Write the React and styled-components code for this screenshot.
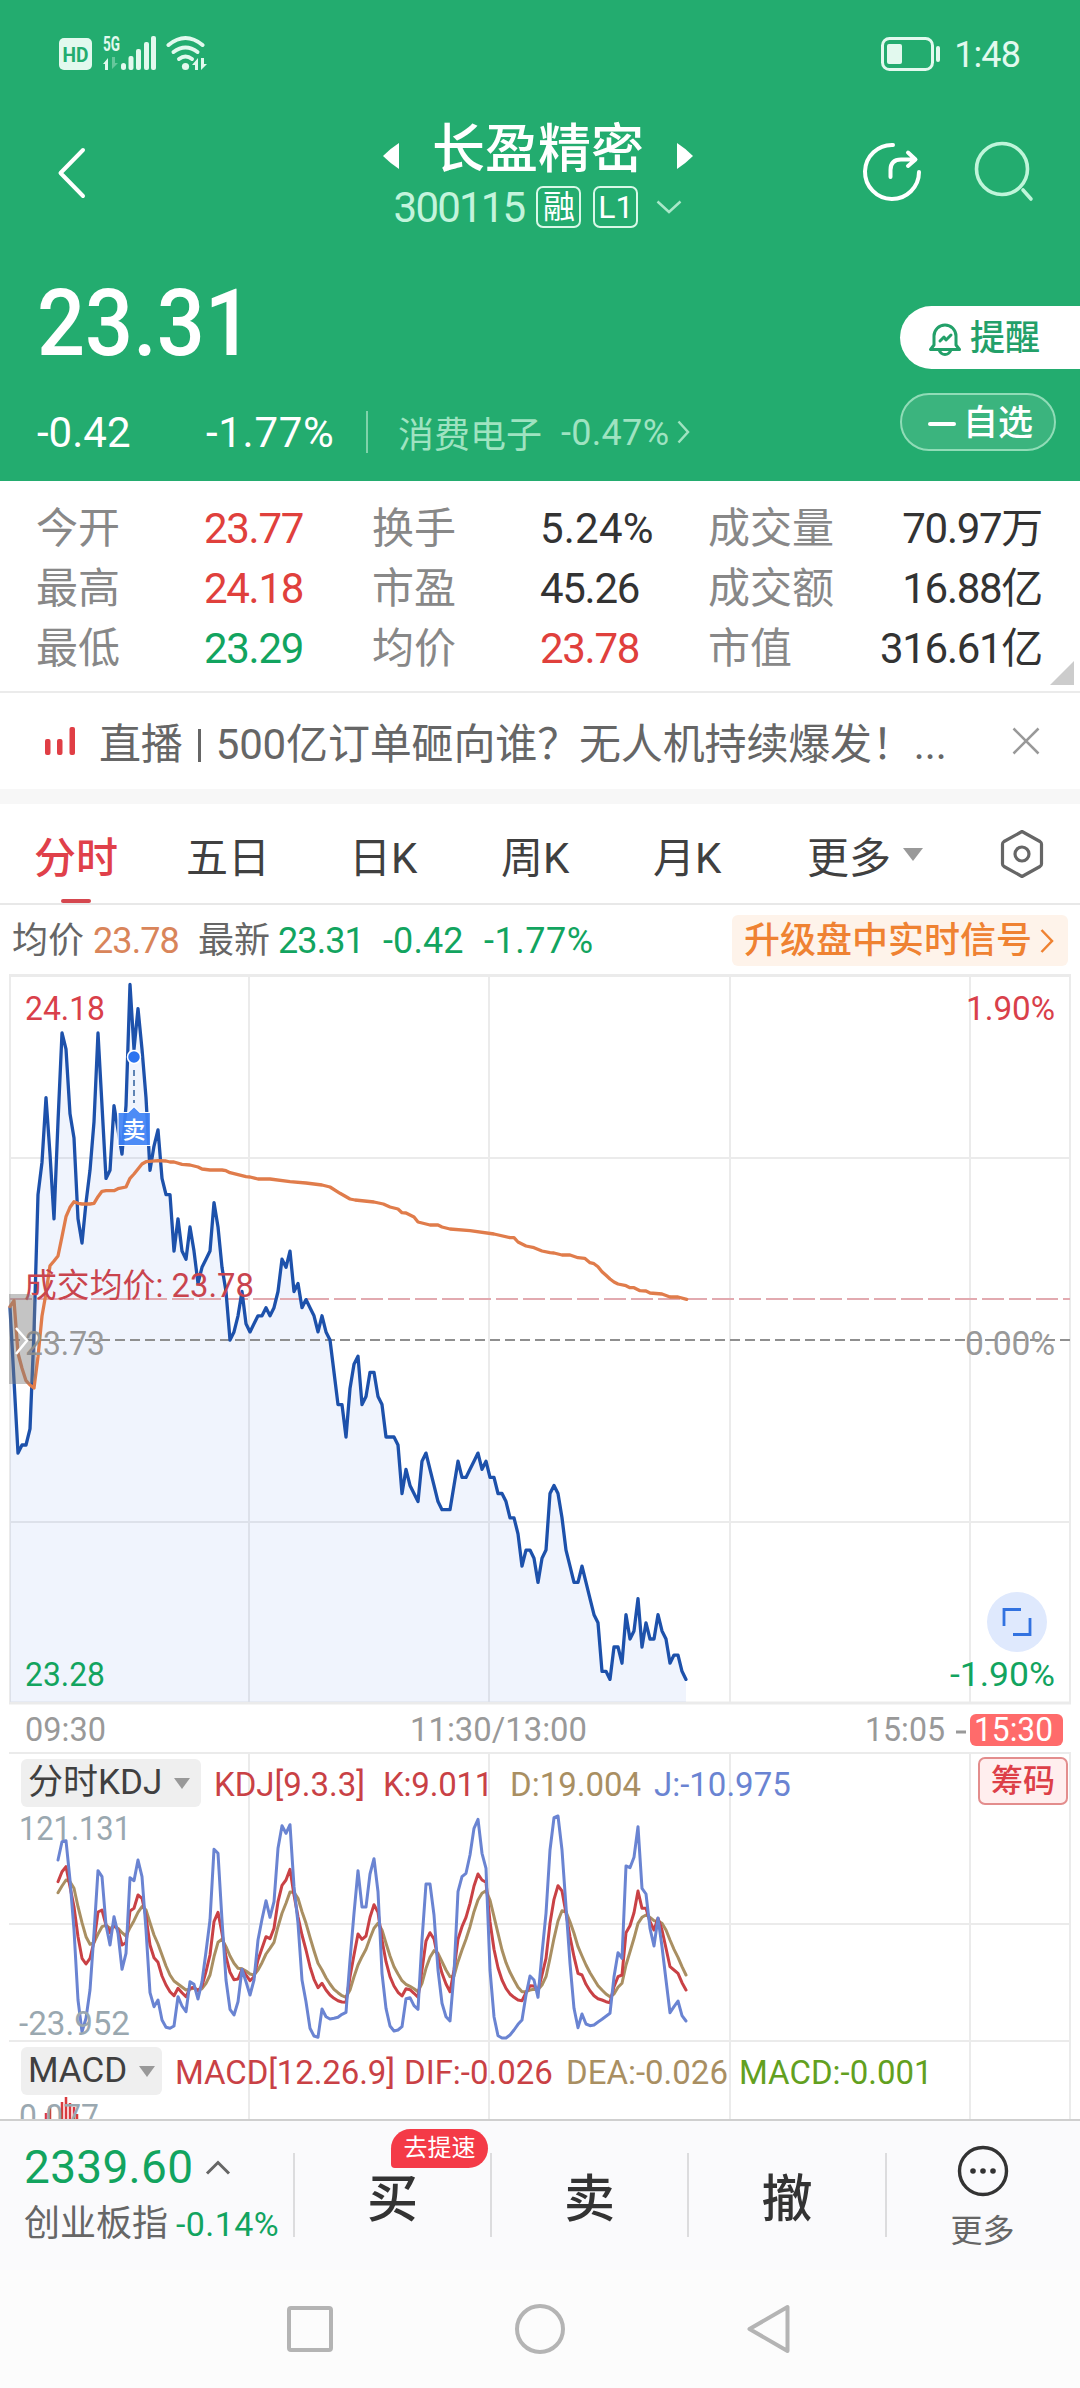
import React from 'react';
import styled, { createGlobalStyle } from 'styled-components';

const GREEN = '#12a45f';
const RED = '#e0403c';
const GRID = '#ebebeb';

// minute by minute price, in cents away from the previous close
const prices = [
  4, -5, -14, -13, -13, -11, 1, 18, 22, 30, 23, 15, 27, 38, 36, 28, 25, 15, 12, 17, 21, 27, 38, 29, 20, 21, 29, 26, 23, 29,
  44, 36, 41, 36, 30, 21, 24, 26, 20, 18, 18, 11, 15, 11, 10, 14, 11, 7, 9, 10, 11, 17, 14, 9, 6, 0, 1, 3, 6, 2,
  1, 2, 3, 3, 4, 3, 4, 6, 10, 9, 11, 6, 7, 4, 5, 4, 3, 1, 3, 1, 0, -4, -8, -8, -12, -6, -3, -2, -8, -7,
  -4, -4, -7, -8, -12, -12, -12, -13, -19, -16, -18, -19, -20, -15, -14, -16, -18, -20, -21, -21, -21, -18, -15, -17, -17,
  -16, -15, -14, -16, -15, -17, -17, -19, -19, -20, -22, -22, -24, -28, -26, -26, -27, -30, -27, -26, -19, -18, -19, -22,
  -26, -28, -30, -30, -28, -30, -32, -34, -35, -41, -41, -42, -38, -38, -40, -34, -37, -36, -32, -38, -35, -37, -37, -34,
  -36, -37, -40, -39, -39, -41, -42,
];

const avgMorning = [
  [30, 1040], [42, 1022], [54, 1180], [66, 1225], [78, 1262], [90, 1275], [102, 1284], [114, 1190], [126, 1068], [138, 1000],
  [150, 917], [162, 903], [174, 888], [186, 830], [198, 770], [210, 742], [222, 725], [234, 730], [246, 732], [270, 732],
  [282, 730], [294, 710], [306, 694], [318, 692], [342, 692], [354, 686], [378, 681], [390, 655], [402, 642], [426, 612],
  [438, 605], [474, 602], [498, 603], [510, 606], [522, 606], [546, 613], [570, 615], [594, 621], [606, 627], [630, 630],
  [666, 630], [678, 632], [690, 638], [738, 650], [750, 651], [774, 657], [810, 657], [870, 665], [918, 669], [966, 675],
  [990, 681], [1020, 700],
];
const avgNoon = [
  [330, 177], [345, 180], [402, 186], [430, 192], [450, 201], [474, 207], [486, 218], [498, 219], [522, 231], [534, 246],
  [570, 255], [594, 255], [606, 261], [630, 267], [690, 272], [762, 282], [810, 293], [822, 293], [834, 306], [858, 318],
  [882, 323], [906, 333], [930, 338], [942, 339], [966, 345], [990, 345], [1014, 353], [1034, 355], [1050, 368], [1062, 371],
  [1074, 380], [1086, 395], [1098, 406], [1110, 417], [1122, 426], [1134, 432], [1158, 437], [1170, 443], [1182, 443],
  [1200, 452], [1218, 453], [1230, 459], [1266, 462], [1290, 471], [1314, 471], [1340, 478],
];
const avgPoints = [...avgMorning, ...avgNoon.map(([x, y]) => [x + 720, y + 540])]
  .map(([x, y]) => `${(x / 3).toFixed(1)},${(y / 3 - 14).toFixed(1)}`)
  .join(' ');

const pricePoints = prices.map((v, i) => `${10 + i * 4},${(366 - v * 8.08).toFixed(1)}`).join(' ');

const join = (a, b) => [...a, ...b.map((v) => v + 120)];

const jLine = join(
  [
    480, 425, 422, 540, 690, 900, 995, 955, 870, 700, 512, 530, 675, 735, 650, 700, 808, 760, 533, 542, 480, 530, 690, 878, 920,
    900, 960, 982, 985, 978, 890, 918, 935, 845, 853, 897, 845, 755, 660, 448, 460, 660, 840, 928, 945, 905, 808, 845, 885, 840,
    720, 658, 602, 652, 605, 445, 377, 400, 374, 560, 670, 840, 905, 985, 1008, 1012, 927, 950, 957, 955, 952, 943, 937, 780,
    640, 512, 621, 621, 522, 476, 575,
  ],
  [
    700, 805, 858, 873, 870, 860, 776, 773, 797, 808, 600, 432, 432, 525, 690, 790, 830, 843, 700, 455, 410, 400, 345, 265, 238,
    340, 385, 690, 830, 887, 894, 894, 885, 870, 853, 840, 765, 708, 720, 772, 640, 520, 330, 233, 228, 330, 500, 670, 805, 863,
    822, 852, 857, 855, 846, 838, 829, 820, 710, 638, 655, 378, 383, 352, 260, 445, 462, 565, 618, 534, 620, 720, 818, 800,
    783, 827, 843,
  ]
);
const kLine = join(
  [
    545, 515, 500, 560, 620, 710, 775, 792, 775, 725, 636, 630, 675, 698, 672, 690, 735, 728, 633, 625, 585, 595, 650, 735, 773,
    787, 828, 855, 875, 887, 865, 878, 890, 865, 862, 873, 858, 815, 765, 665, 637, 700, 770, 817, 839, 837, 808, 825, 842, 830,
    780, 745, 710, 716, 685, 605, 556, 540, 508, 585, 650, 705, 750, 800, 838, 863, 850, 870, 885, 895, 902, 906, 907, 830,
    765, 702, 718, 708, 652, 614, 637,
  ],
  [
    600, 665, 710, 738, 757, 768, 746, 749, 760, 772, 690, 603, 578, 597, 655, 700, 732, 755, 690, 598, 560, 532, 490, 438, 402,
    420, 427, 545, 628, 683, 720, 745, 762, 772, 780, 782, 758, 737, 738, 750, 705, 655, 550, 478, 437, 453, 520, 590, 650, 700,
    705, 733, 752, 767, 776, 780, 785, 788, 740, 710, 705, 578, 557, 518, 453, 505, 505, 545, 570, 535, 570, 625, 680, 690,
    700, 728, 750,
  ]
);
const dLine = join(
  [
    578, 558, 540, 545, 565, 620, 668, 710, 733, 728, 702, 680, 676, 685, 680, 685, 698, 708, 683, 662, 637, 620, 630, 668, 705,
    732, 765, 798, 825, 843, 852, 861, 870, 867, 865, 870, 866, 850, 825, 770, 727, 718, 740, 768, 790, 805, 806, 813, 822, 825,
    810, 788, 762, 745, 727, 680, 640, 610, 576, 577, 595, 635, 670, 712, 752, 790, 810, 833, 852, 868, 878, 887, 892, 870,
    830, 795, 770, 748, 715, 685, 670,
  ],
  [
    570, 610, 648, 680, 702, 722, 733, 739, 746, 755, 730, 685, 652, 632, 640, 665, 690, 710, 708, 665, 630, 598, 560, 515, 480,
    460, 452, 480, 530, 580, 630, 668, 697, 720, 742, 755, 755, 750, 748, 749, 735, 710, 655, 595, 543, 512, 515, 545, 580, 620,
    648, 675, 698, 718, 737, 750, 762, 770, 762, 742, 730, 675, 635, 595, 550, 532, 525, 532, 542, 543, 550, 570, 600, 628,
    652, 680, 705,
  ]
);
const kdjPoints = (ys) => ys.map((y, i) => `${58 + i * 4},${(y / 3 - 52).toFixed(1)}`).join(' ');

const stats = [
  ['今开', '23.77', RED, '换手', '5.24%', '#333', '成交量', '70.97万'],
  ['最高', '24.18', RED, '市盈', '45.26', '#333', '成交额', '16.88亿'],
  ['最低', '23.29', GREEN, '均价', '23.78', RED, '市值', '316.61亿'],
];

const tabs = ['五日', '日K', '周K', '月K'];

function ChartText({ x, y, w, color, children, end }) {
  return (
    <text x={x} y={y} fill={color} fontSize="33" textLength={w} lengthAdjust="spacingAndGlyphs" textAnchor={end ? 'end' : 'start'}>
      {children}
    </text>
  );
}

function StatusIcons() {
  return (
    <svg width="160" height="44" viewBox="0 0 160 44" fill="#e2f9ee">
      <rect x="5" y="6" width="33" height="32" rx="5" />
      <text x="21.5" y="30" fontSize="21" fontWeight="700" fill="#23ac6f" textAnchor="middle" textLength="26" lengthAdjust="spacingAndGlyphs">HD</text>
      <text x="49" y="19" fontSize="20" fontWeight="700" textLength="17" lengthAdjust="spacingAndGlyphs">5G</text>
      <path d="M49 32l5-6v12h-3v-6z" />
      <path d="M58 25v12l6-6h-3v-6z" opacity=".35" />
      <rect x="67" y="31" width="5" height="7" rx="2.5" />
      <rect x="74.500" y="24" width="5" height="14" rx="2" />
      <rect x="82" y="17" width="5" height="21" rx="2" />
      <rect x="90" y="10" width="5" height="28" rx="2" />
      <rect x="97" y="4" width="5" height="34" rx="2" />
      <g fill="none" stroke="#e2f9ee" strokeWidth="4" strokeLinecap="round">
        <path d="M114.500 13q17-14 34 0" />
        <path d="M119.500 20q12-9 24 0" />
        <path d="M125 27q6.500-5 13 0" />
      </g>
      <circle cx="131.500" cy="34.500" r="3.600" />
      <path d="M138 33l6-7v12h-3v-5z" />
      <path d="M147 26v12l6-6h-3v-6z" />
    </svg>
  );
}

export default function App() {
  return (
    <Screen>
      <GlobalStyle />
      <Header>
        <StatusBar>
          <StatusIcons />
          <StatusRight>
            <svg width="62" height="34" viewBox="0 0 62 34" fill="none">
              <rect x="1.500" y="1.500" width="50" height="31" rx="7" stroke="#e2f9ee" strokeWidth="3" />
              <rect x="6" y="7" width="15" height="20" rx="2" fill="#e2f9ee" />
              <rect x="55" y="9" width="4" height="16" rx="2" fill="#e2f9ee" />
            </svg>
            <Clock>1:48</Clock>
          </StatusRight>
        </StatusBar>

        <NavRow>
          <svg width="30" height="54" viewBox="0 0 30 54" fill="none" stroke="#fff" strokeWidth="4" strokeLinecap="round" strokeLinejoin="round">
            <path d="M26 4L3.500 27 26 50" />
          </svg>
          <StockTitle>
            <NameRow>
              <svg width="18" height="28" viewBox="0 0 18 28" fill="#fff"><path d="M17 1v26Q9 22 1 14 9 6 17 1z" /></svg>
              <Name>长盈精密</Name>
              <svg width="18" height="28" viewBox="0 0 18 28" fill="#fff"><path d="M1 1v26Q9 22 17 14 9 6 1 1z" /></svg>
            </NameRow>
            <CodeRow>
              <Code>300115</Code>
              <Flag>融</Flag>
              <Flag>L1</Flag>
              <svg width="26" height="14" viewBox="0 0 26 14" fill="none" stroke="#a9e8c9" strokeWidth="2.500"><path d="M1.500 1.500L13 12 24.500 1.500" /></svg>
            </CodeRow>
          </StockTitle>
          <NavIcons>
            <svg width="62" height="62" viewBox="0 0 62 62" fill="none" stroke="#fff" strokeWidth="4" strokeLinecap="round" strokeLinejoin="round">
              <path d="M32 4A27 27 0 1 0 58 31" />
              <path d="M29.500 36v-7q0-10.500 10.500-10.500h14M47 11.500l7.500 7L47 25" />
            </svg>
            <svg width="60" height="62" viewBox="0 0 60 62" fill="none" stroke="#bff5da" strokeWidth="3.600" strokeLinecap="round">
              <circle cx="28" cy="28" r="25.500" />
              <path d="M49 49l8 9" />
            </svg>
          </NavIcons>
        </NavRow>

        <Quote>
          <div>
            <Price>23.31</Price>
            <ChangeRow>
              <Change>-0.42</Change>
              <Change $ls={0.7}>-1.77%</Change>
              <Sector>
                <span>消费电子</span>
                <SectorPct>-0.47%</SectorPct>
                <svg width="13" height="24" viewBox="0 0 13 24" fill="none" stroke="#9fe3c1" strokeWidth="2.500"><path d="M1.500 1.500L11 12 1.500 22.500" /></svg>
              </Sector>
            </ChangeRow>
          </div>
          <Actions>
            <Remind>
              <svg width="34" height="36" viewBox="0 0 34 36" fill="none" stroke="#23a069" strokeWidth="3" strokeLinejoin="round" strokeLinecap="round">
                <path d="M2.500 28.500h29L28 24V15a11 11 0 0 0-22 0v9z" />
                <path d="M11 29q2 4.500 6 4.500t6-4.500" />
                <path d="M12 20l4-4 2 3 5-5" />
              </svg>
              提醒
            </Remind>
            <Watch><i />自选</Watch>
          </Actions>
        </Quote>
      </Header>

      <Stats>
        {stats.map(([a, av, ac, b, bv, bc, c, cv]) => (
          <StatRow key={a}>
            <Label>{a}</Label>
            <Value $color={ac}>{av}</Value>
            <Label>{b}</Label>
            <Value $color={bc} $ls={bv.endsWith('%') ? 0.2 : undefined}>{bv}</Value>
            <Label>{c}</Label>
            <Value $color="#333" $right>{cv}</Value>
          </StatRow>
        ))}
        <Corner />
      </Stats>

      <News>
        <svg width="32" height="28" viewBox="0 0 32 28" fill="#e03e45">
          <rect x="0" y="12" width="5.500" height="16" rx="2" />
          <rect x="12" y="12" width="5.500" height="16" rx="2" />
          <rect x="24.500" y="0" width="5.500" height="28" rx="2" />
        </svg>
        <NewsText>直播<NewsBar />500亿订单砸向谁？无人机持续爆发！...</NewsText>
        <svg width="28" height="28" viewBox="0 0 28 28" stroke="#999" strokeWidth="2.500"><path d="M1.500 1.500l25 25M26.500 1.500l-25 25" /></svg>
      </News>

      <Tabs>
        <Tab $active>分时</Tab>
        {tabs.map((t) => <Tab key={t}>{t}</Tab>)}
        <Tab>更多<Caret $w={10} $h={13} /></Tab>
        <svg width="44" height="50" viewBox="0 0 44 50" fill="none" stroke="#666" strokeWidth="3.200" strokeLinejoin="round">
          <path d="M22 2.500L40 12.500Q41.500 13.500 41.500 15v20q0 1.500-1.500 2.500L22 47.500 4 37.500Q2.500 36.500 2.500 35V15q0-1.500 1.500-2.500z" />
          <circle cx="22" cy="25" r="7" />
        </svg>
      </Tabs>

      <InfoRow>
        <InfoText>均价</InfoText>
        <InfoNum $color="#d9855a">23.78</InfoNum>
        <InfoText>最新</InfoText>
        <InfoNum $color={GREEN}>23.31</InfoNum>
        <InfoNum $color={GREEN} $ls={0.1}>-0.42</InfoNum>
        <InfoNum $color={GREEN} $ls={0.5}>-1.77%</InfoNum>
        <Upgrade>
          升级盘中实时信号
          <svg width="14" height="26" viewBox="0 0 14 26" fill="none" stroke="#ef8232" strokeWidth="2.500"><path d="M1.500 2L12 13 1.500 24" /></svg>
        </Upgrade>
      </InfoRow>

      <MainChart width="1080" height="778" viewBox="0 0 1080 778">
        <g stroke={GRID} strokeWidth="2">
          <path d="M10 1v728M1070 1v728M249 1v728M489 1v728M730 1v728M970 1v728M9 184h1061M9 548h1061" />
          <path d="M9 1.500h1062M9 729h1062" strokeWidth="3" />
        </g>
        <polygon points={`10,728 ${pricePoints} 686,728`} fill="#3b78e7" fillOpacity=".08" />
        <path d="M10 366h1060" stroke="#8f8f8f" strokeWidth="2" strokeDasharray="10 5" />
        <path d="M10 325h1060" stroke="#e2aab0" strokeWidth="2" strokeDasharray="22 5" />
        <polyline points={pricePoints} fill="none" stroke="#1d51ab" strokeWidth="3.300" strokeLinejoin="round" strokeLinecap="round" />
        <polyline points={avgPoints} fill="none" stroke="#e07c4b" strokeWidth="3.300" strokeLinejoin="round" strokeLinecap="round" />

        <ChartText x="25" y="46" w="80" color="#d9404a">24.18</ChartText>
        <ChartText x="1055" y="46" w="89" color="#d9404a" end>1.90%</ChartText>
        <ChartText x="24" y="323" w="230" color="#c9444e">成交均价: 23.78</ChartText>
        <ChartText x="25" y="381" w="80" color="#999">23.73</ChartText>
        <ChartText x="1055" y="381" w="90" color="#999" end>0.00%</ChartText>
        <ChartText x="25" y="712" w="80" color={GREEN}>23.28</ChartText>
        <ChartText x="1055" y="712" w="105" color={GREEN} end>-1.90%</ChartText>

        {/* sell marker */}
        <path d="M134 96v33" stroke="#5f84b5" strokeWidth="2" strokeDasharray="6 4" />
        <circle cx="134" cy="83" r="6.500" fill="#2b73f0" stroke="#fff" strokeWidth="1.500" />
        <path d="M118 138.500h10l6-6 6 6h10.500V171.500H118z" fill="#3f82f5" fillOpacity=".92" stroke="#fff" strokeWidth="1.200" />
        <text x="134" y="163.500" fontSize="23" fill="#fff" textAnchor="middle" fontWeight="500">卖</text>

        {/* pull-out handle */}
        <path d="M9 320h18q9 0 9 9v72q0 9-9 9H9z" fill="#7c7c7c" fillOpacity=".45" />
        <path d="M16 354l11 12.500L16 380" fill="none" stroke="#fff" strokeWidth="2.500" />

        <circle cx="1017" cy="648" r="30" fill="#dfe9fd" />
        <path d="M1004 652v-16.500h17M1030 644v16.500h-17" fill="none" stroke="#3272e0" strokeWidth="2.800" />

        <ChartText x="25" y="767" w="81" color="#999">09:30</ChartText>
        <ChartText x="410" y="767" w="177" color="#999">11:30/13:00</ChartText>
        <ChartText x="865" y="767" w="80" color="#999">15:05</ChartText>
        <path d="M956 758h10" stroke="#999" strokeWidth="3" />
        <rect x="970" y="740" width="93" height="32" rx="6" fill="#ff6b6b" />
        <ChartText x="974" y="767" w="79" color="#fff">15:30</ChartText>
      </MainChart>

      <Indicators>
        <Lines width="1080" height="367" viewBox="0 0 1080 367">
          <path d="M9 1h1062M9 172h1062M9 289h1062M249 1v366M489 1v366M730 1v366M970 1v366M1070 1v366" stroke={GRID} strokeWidth="2" />
          <ChartText x="19" y="88" w="112" color="#9aa8b0">121.131</ChartText>
          <g fill="none" strokeWidth="3" strokeLinejoin="round" strokeLinecap="round">
            <polyline points={kdjPoints(dLine)} stroke="#a98f62" />
            <polyline points={kdjPoints(kLine)} stroke="#c94145" />
            <polyline points={kdjPoints(jLine)} stroke="#6a84d2" />
          </g>
          <ChartText x="19" y="283" w="111" color="#9aa8b0">-23.952</ChartText>
          <path d="M46 361v6M50 354v13M62 350v17M66 345v22M70 351v16M74 355v12M77 362v5" stroke="#d93b3f" strokeWidth="2.500" />
          <ChartText x="19" y="376" w="80" color="#9aa8b0">0.077</ChartText>
        </Lines>
        <IndicatorHead>
          <Chip $w={180}>分时KDJ<Caret $w={8} $h={11} /></Chip>
          <IndText $w={169} $color="#c94145" $ml={13}>KDJ[9.3.3]</IndText>
          <IndText $w={127} $color="#c94145" $ls={-0.2}>K:9.011</IndText>
          <IndText $w={144} $color="#a98f62">D:19.004</IndText>
          <IndText $w={140} $color="#6a84d2">J:-10.975</IndText>
          <ChipsButton>筹码</ChipsButton>
        </IndicatorHead>
        <IndicatorHead>
          <Chip $w={141}>MACD<Caret $w={8} $h={11} /></Chip>
          <IndText $w={229} $color="#c94145" $ml={13} $ls={-0.1}>MACD[12.26.9]</IndText>
          <IndText $w={162} $color="#c94145">DIF:-0.026</IndText>
          <IndText $w={173} $color="#a98f62">DEA:-0.026</IndText>
          <IndText $w={190} $color="#62a020">MACD:-0.001</IndText>
        </IndicatorHead>
      </Indicators>

      <Footer>
        <IndexBox>
          <IndexValue>
            2339.60
            <svg width="26" height="15" viewBox="0 0 26 15" fill="none" stroke="#666" strokeWidth="3"><path d="M2 13.500L13 2.500 24 13.500" /></svg>
          </IndexValue>
          <IndexName>创业板指<b>-0.14%</b></IndexName>
        </IndexBox>
        <Trade>买<Badge>去提速</Badge></Trade>
        <Trade>卖</Trade>
        <Trade>撤</Trade>
        <More>
          <svg width="52" height="52" viewBox="0 0 52 52" fill="#333">
            <circle cx="26" cy="26" r="23.500" fill="none" stroke="#333" strokeWidth="3.400" />
            <circle cx="16" cy="26" r="2.800" /><circle cx="26" cy="26" r="2.800" /><circle cx="36" cy="26" r="2.800" />
          </svg>
          更多
        </More>
      </Footer>

      <SystemNav>
        <svg width="48" height="52" viewBox="0 0 48 52"><rect x="2" y="5" width="42" height="42" rx="2" /></svg>
        <svg width="52" height="52" viewBox="0 0 52 52"><circle cx="26" cy="26" r="23" /></svg>
        <svg width="48" height="52" viewBox="0 0 48 52"><path d="M42.500 4v44L4.500 26z" /></svg>
      </SystemNav>
    </Screen>
  );
}

const GlobalStyle = createGlobalStyle`
  body {
    margin: 0;
    background: #fff;
  }
  * {
    box-sizing: border-box;
  }
  svg {
    display: block;
    flex-shrink: 0;
  }
`;

const Screen = styled.div`
  width: 1080px;
  height: 2388px;
  overflow: hidden;
  display: flex;
  flex-direction: column;
  background: #fff;
  font-family: Roboto, 'Noto Sans CJK SC', sans-serif;
  white-space: nowrap;
`;

const Header = styled.header`
  height: 481px;
  background: #23ac6f;
  color: #fff;
`;

const StatusBar = styled.div`
  height: 108px;
  padding: 0 60px 0 54px;
  display: flex;
  align-items: center;
  justify-content: space-between;
`;

const StatusRight = styled.div`
  display: flex;
  align-items: center;
  gap: 11px;
`;

const Clock = styled.span`
  font-size: 36px;
  line-height: 40px;
  letter-spacing: -0.9px;
  padding-top: 2px;
  color: #e2f9ee;
`;

const NavRow = styled.div`
  height: 130px;
  padding: 0 43px 0 57px;
  display: grid;
  grid-template-columns: 294px 1fr 176px;
  align-items: center;
`;

const StockTitle = styled.div`
  display: flex;
  flex-direction: column;
  align-items: center;
  width: 374px;
`;

const NameRow = styled.div`
  display: flex;
  align-items: center;
  gap: 32px;
  height: 68px;
  svg {
    margin-top: 12px;
  }
`;

const Name = styled.h1`
  margin: 0;
  font-size: 53px;
  line-height: 68px;
  font-weight: 500;
`;

const CodeRow = styled.div`
  display: flex;
  align-items: center;
  height: 46px;
  gap: 12px;
  svg {
    margin-left: 6px;
  }
`;

const Code = styled.span`
  font-size: 42px;
  color: #c3f4dc;
  letter-spacing: -1.8px;
`;

const Flag = styled.span`
  width: 45px;
  height: 42px;
  border: 2px solid #d9f8e8;
  border-radius: 7px;
  font-size: 32px;
  line-height: 38px;
  text-align: center;
`;

const NavIcons = styled.div`
  display: flex;
  gap: 51px;
  margin-top: -2px;
`;

const Quote = styled.div`
  display: flex;
  justify-content: space-between;
`;

const Price = styled.div`
  margin: 33px 0 0 37px;
  width: 240px;
  font-size: 92px;
  line-height: 106px;
  font-weight: 500;
  transform: scaleX(0.92);
  transform-origin: left;
`;

const ChangeRow = styled.div`
  display: grid;
  grid-template-columns: 169px 160px auto;
  align-items: center;
  margin: 29px 0 0 37px;
  height: 50px;
`;

const Change = styled.span`
  font-size: 42px;
  padding-top: 2px;
  letter-spacing: ${(p) => p.$ls || 0}px;
`;

const Sector = styled.div`
  display: flex;
  align-items: center;
  height: 42px;
  padding-left: 30px;
  border-left: 2px solid #7fd3aa;
  font-size: 36px;
  color: #9fe3c1;
`;

const SectorPct = styled.span`
  margin: 2px 8px 0 19px;
  letter-spacing: 0.3px;
`;

const Actions = styled.div`
  width: 180px;
  padding-top: 68px;
`;

const Remind = styled.button`
  width: 180px;
  height: 63px;
  padding: 3px 0 0 28px;
  border: 0;
  border-radius: 32px 0 0 32px;
  background: #fff;
  color: #23a069;
  display: flex;
  align-items: center;
  gap: 8px;
  font: 500 35px/60px Roboto, 'Noto Sans CJK SC', sans-serif;
`;

const Watch = styled.button`
  width: 156px;
  height: 58px;
  margin-top: 24px;
  padding: 3px 0 0 26px;
  border: 2px solid #90dcb7;
  border-radius: 29px;
  background: #3bb47e;
  color: #fff;
  display: flex;
  align-items: center;
  gap: 7px;
  font: 500 35px/54px Roboto, 'Noto Sans CJK SC', sans-serif;
  i {
    width: 28px;
    height: 4px;
    border-radius: 2px;
    background: #fff;
  }
`;

const Stats = styled.section`
  position: relative;
  height: 212px;
  padding: 18px 38px 0 36px;
  border-bottom: 2px solid #ebebeb;
`;

const StatRow = styled.div`
  display: grid;
  grid-template-columns: 168px 168px 168px 168px 130px 1fr;
  height: 60px;
  line-height: 60px;
  font-size: 42px;
`;

const Label = styled.span`
  color: #888;
`;

const Value = styled.span`
  color: ${(p) => p.$color};
  letter-spacing: ${(p) => p.$ls ?? -1.3}px;
  text-align: ${(p) => (p.$right ? 'right' : 'left')};
`;

const Corner = styled.i`
  position: absolute;
  right: 6px;
  bottom: 6px;
  border-left: 24px solid transparent;
  border-bottom: 24px solid #ccc;
`;

const News = styled.section`
  height: 111px;
  padding: 4px 40px 0 45px;
  border-bottom: 15px solid #f7f7f7;
  display: flex;
  align-items: center;
  svg {
    margin-top: -4px;
  }
`;

const NewsText = styled.p`
  flex: 1;
  margin: 4px 0 0 22px;
  font-size: 42px;
  line-height: 60px;
  color: #666;
  letter-spacing: -0.15px;
`;

const NewsBar = styled.i`
  display: inline-block;
  width: 3px;
  height: 33px;
  margin: 0 15px 0 15px;
  vertical-align: -3px;
  background: #666;
`;

const Tabs = styled.nav`
  height: 101px;
  border-bottom: 2px solid #e8e8e8;
  padding: 0 0 0 34px;
  display: grid;
  grid-template-columns: 152px 163px 152px 152px 154px 193px auto;
  align-items: center;
`;

const Tab = styled.span`
  position: relative;
  display: flex;
  align-items: center;
  height: 99px;
  padding-top: 2px;
  font-size: 42px;
  font-weight: ${(p) => (p.$active ? 500 : 400)};
  color: ${(p) => (p.$active ? '#e0404a' : '#404040')};
  &::after {
    content: '';
    display: ${(p) => (p.$active ? 'block' : 'none')};
    position: absolute;
    left: 27px;
    bottom: 0;
    width: 30px;
    height: 4px;
    border-radius: 2px;
    background: #d5474f;
  }
`;

const Caret = styled.i`
  margin-left: 12px;
  border: solid transparent;
  border-width: ${(p) => `${p.$h}px ${p.$w}px 0`};
  border-top-color: #999;
`;

const InfoRow = styled.div`
  height: 69px;
  padding: 2px 12px 0 12px;
  display: grid;
  grid-template-columns: 81px 105px 80px 105px 101px 1fr auto;
  align-items: center;
  font-size: 36px;
  line-height: 50px;
`;

const InfoText = styled.span`
  color: #666;
`;

const InfoNum = styled.span`
  color: ${(p) => p.$color};
  letter-spacing: ${(p) => p.$ls ?? -0.9}px;
`;

const Upgrade = styled.span`
  width: 336px;
  height: 51px;
  padding-left: 12px;
  border-radius: 6px;
  background: #fef3ea;
  color: #ef8232;
  font-weight: 500;
  display: flex;
  align-items: center;
  gap: 8px;
`;

const MainChart = styled.svg`
  font-family: Roboto, 'Noto Sans CJK SC', sans-serif;
`;

const Indicators = styled.section`
  position: relative;
  height: 367px;
  overflow: hidden;
`;

const Lines = styled.svg`
  position: absolute;
  left: 0;
  top: 0;
`;

const IndicatorHead = styled.div`
  position: relative;
  display: flex;
  align-items: center;
  height: 48px;
  margin: 7px 12px 240px 21px;
`;

const Chip = styled.span`
  width: ${(p) => p.$w}px;
  height: 48px;
  padding-left: 7px;
  border-radius: 6px;
  background: #efefef;
  color: #404040;
  font-size: 35px;
  line-height: 46px;
  display: flex;
  align-items: center;
`;

const IndText = styled.span`
  width: ${(p) => p.$w}px;
  margin-left: ${(p) => p.$ml || 0}px;
  margin-top: 2px;
  color: ${(p) => p.$color};
  font-size: 33px;
  letter-spacing: ${(p) => p.$ls || 0}px;
`;

const ChipsButton = styled.span`
  margin: -5px 0 0 auto;
  width: 90px;
  height: 48px;
  border: 2px solid #e38d8d;
  border-radius: 7px;
  background: #ffeeee;
  color: #dd3f48;
  font-size: 32px;
  font-weight: 500;
  line-height: 45px;
  text-align: center;
`;

const Footer = styled.footer`
  height: 151px;
  border-top: 2px solid #cfcfcf;
  background: #fafafc;
  display: grid;
  grid-template-columns: 293px 197px 197px 198px 195px;
`;

const IndexBox = styled.div`
  padding: 18px 0 0 24px;
`;

const IndexValue = styled.div`
  display: flex;
  align-items: center;
  gap: 12px;
  font-size: 46px;
  line-height: 56px;
  letter-spacing: 0.3px;
  color: ${GREEN};
`;

const IndexName = styled.div`
  margin-top: 4px;
  font-size: 36px;
  line-height: 50px;
  color: #666;
  b {
    margin-left: 8px;
    font-size: 34px;
    font-weight: 400;
    letter-spacing: 0.4px;
    color: ${GREEN};
  }
`;

const Trade = styled.div`
  position: relative;
  height: 84px;
  margin-top: 32px;
  border-left: 2px solid #dcdcde;
  font-size: 51px;
  line-height: 94px;
  font-weight: 500;
  text-align: center;
  color: #333;
`;

const Badge = styled.span`
  position: absolute;
  left: 96px;
  top: -24px;
  width: 97px;
  height: 39px;
  border-radius: 20px 20px 20px 4px;
  background: #f43a47;
  color: #fff;
  font-size: 24px;
  font-weight: 400;
  line-height: 38px;
`;

const More = styled.div`
  position: relative;
  margin-top: 24px;
  display: flex;
  flex-direction: column;
  align-items: center;
  font-size: 32px;
  line-height: 46px;
  gap: 11px;
  color: #666;
  &::before {
    content: '';
    position: absolute;
    left: 0;
    top: 8px;
    width: 2px;
    height: 84px;
    background: #dcdcde;
  }
`;

const SystemNav = styled.div`
  height: 118px;
  background: #fcfcfc;
  display: flex;
  align-items: center;
  justify-content: center;
  gap: 179px;
  svg {
    fill: none;
    stroke: #b4b4b4;
    stroke-width: 4;
    stroke-linejoin: round;
  }
`;
